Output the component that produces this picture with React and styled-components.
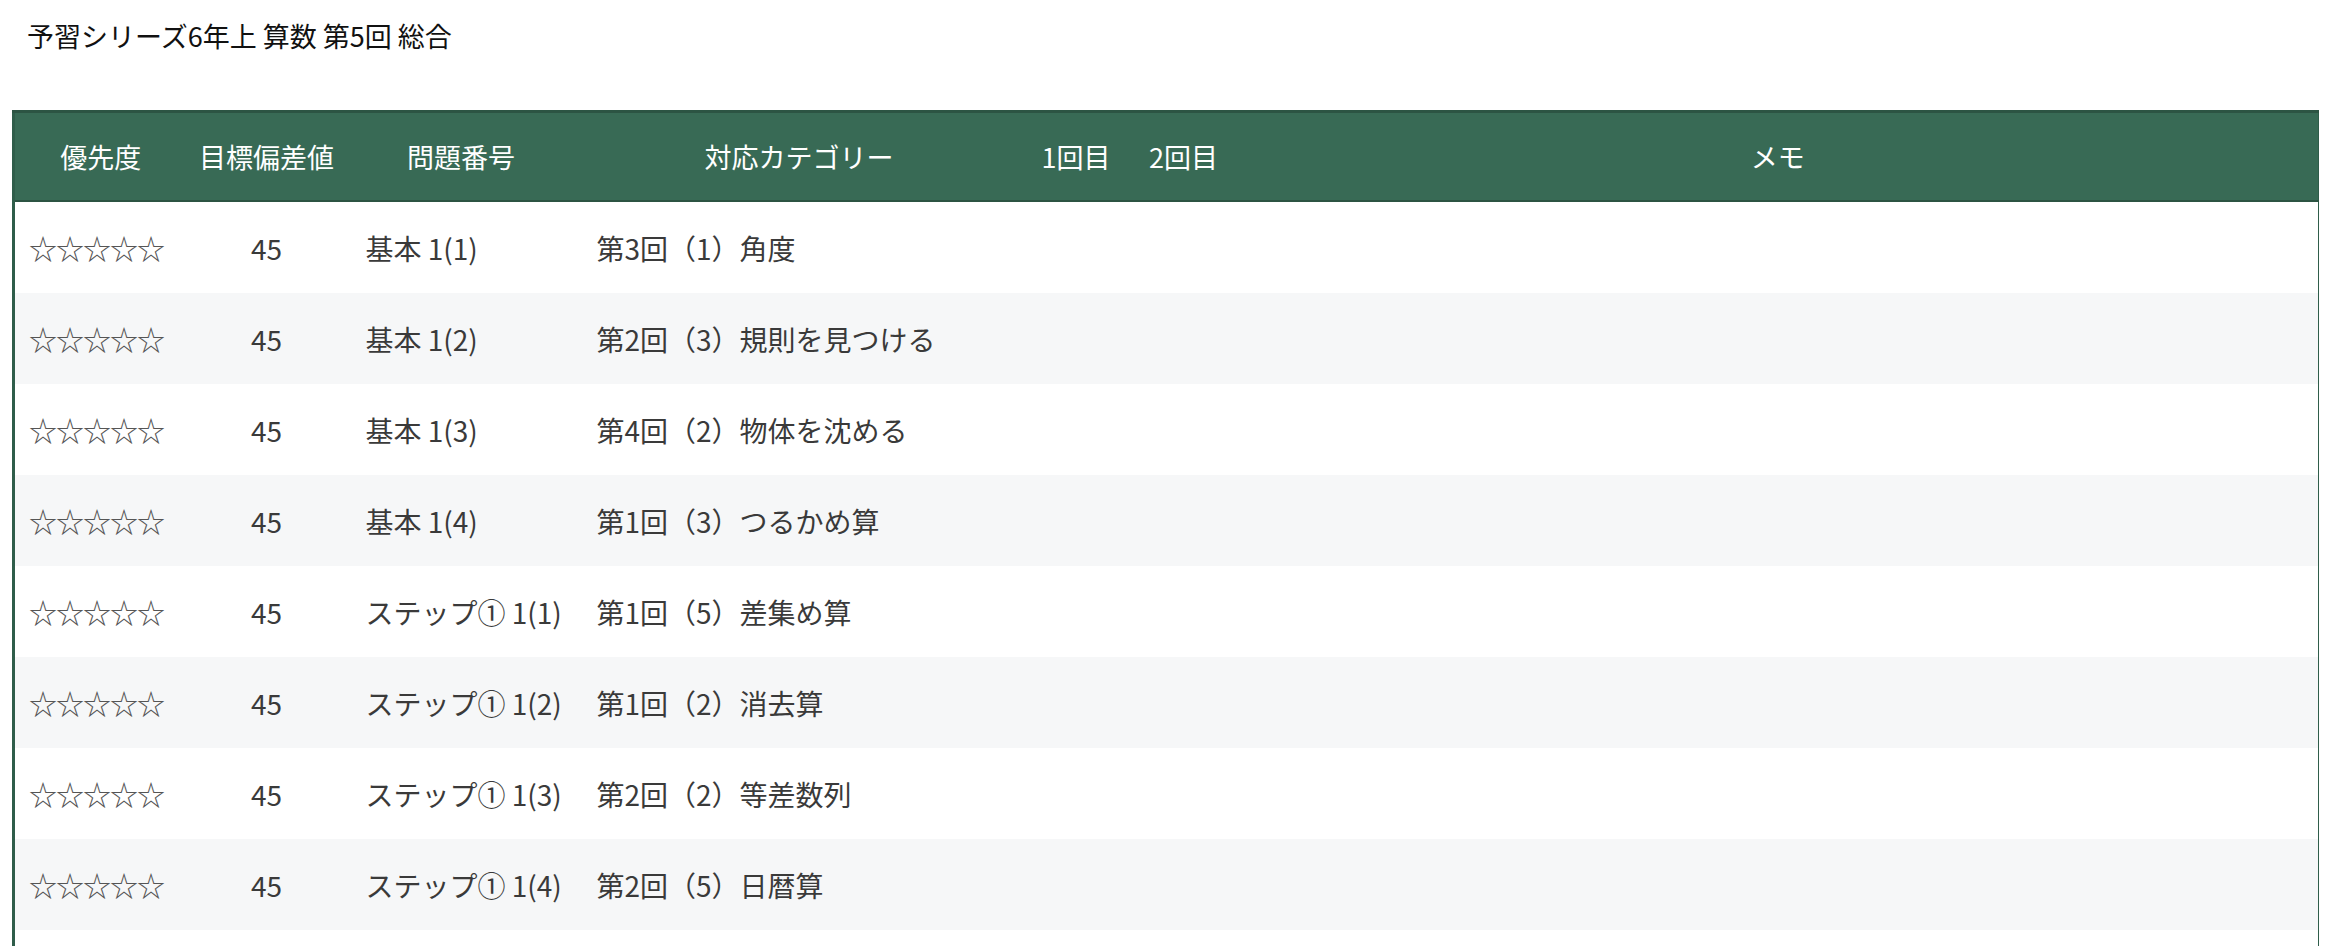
import React from "react";
import styled, { createGlobalStyle } from "styled-components";

const Global = createGlobalStyle`
  html, body { margin: 0; padding: 0; background: #fff; overflow: hidden; }
  body { font-family: "Noto Sans CJK JP", "Noto Sans", sans-serif; color: #333; }
`;

const Page = styled.div`
  padding: 14px 12px 0 12px;
  width: 2307px;
`;

const Title = styled.h1`
  margin: 0 0 52px 15px;
  font-size: 27px;
  font-weight: 400;
  color: #111;
  line-height: 44px;
`;

const Table = styled.table`
  width: 100%;
  border-collapse: collapse;
  table-layout: fixed;
  border-left: 3px solid #2f5d4a;
  border-right: 1px solid #2f5d4a;
`;

const HeadRow = styled.tr`
  background: #386a55;
  border-top: 3px solid #2c5443;
  border-bottom: 2px solid #2c5443;
`;

const Th = styled.th`
  height: 87px;
  font-size: 27px;
  font-weight: 400;
  color: #fff;
  text-align: center;
  padding: 0;
`;

const Row = styled.tr`
  background: ${(p) => (p.$alt ? "#f6f7f8" : "#fff")};
`;

const Td = styled.td`
  height: 91px;
  font-size: 28px;
  color: #3a3a3a;
  padding: 0 0 0 ${(p) => p.$pad ?? 17}px;
  text-align: ${(p) => p.$align || "left"};
  white-space: nowrap;
  overflow: hidden;
`;

const Stars = styled.span`
  font-family: "Noto Sans CJK JP", sans-serif;
  font-size: 28px;
  letter-spacing: -1px;
  color: #555;
`;

const rows = [
  ["基本 1(1)", "第3回（1）角度"],
  ["基本 1(2)", "第2回（3）規則を見つける"],
  ["基本 1(3)", "第4回（2）物体を沈める"],
  ["基本 1(4)", "第1回（3）つるかめ算"],
  ["ステップ① 1(1)", "第1回（5）差集め算"],
  ["ステップ① 1(2)", "第1回（2）消去算"],
  ["ステップ① 1(3)", "第2回（2）等差数列"],
  ["ステップ① 1(4)", "第2回（5）日暦算"],
];

export default function App() {
  return (
    <>
      <Global />
      <Page>
        <Title>予習シリーズ6年上 算数 第5回 総合</Title>
        <Table>
          <colgroup>
            <col style={{ width: 173 }} />
            <col style={{ width: 160 }} />
            <col style={{ width: 229 }} />
            <col style={{ width: 447 }} />
            <col style={{ width: 107 }} />
            <col style={{ width: 108 }} />
            <col />
          </colgroup>
          <thead>
            <HeadRow>
              <Th>優先度</Th>
              <Th>目標偏差値</Th>
              <Th>問題番号</Th>
              <Th>対応カテゴリー</Th>
              <Th>1回目</Th>
              <Th>2回目</Th>
              <Th>メモ</Th>
            </HeadRow>
          </thead>
          <tbody>
            {rows.map(([q, c], i) => (
              <Row key={i} $alt={i % 2 === 1}>
                <Td $pad={14}><Stars>☆☆☆☆☆</Stars></Td>
                <Td $align="center" $pad={0}>45</Td>
                <Td $pad={19}>{q}</Td>
                <Td $pad={21}>{c}</Td>
                <Td />
                <Td />
                <Td />
              </Row>
            ))}
            <Row>
              <Td /><Td /><Td /><Td /><Td /><Td /><Td />
            </Row>
          </tbody>
        </Table>
      </Page>
    </>
  );
}
